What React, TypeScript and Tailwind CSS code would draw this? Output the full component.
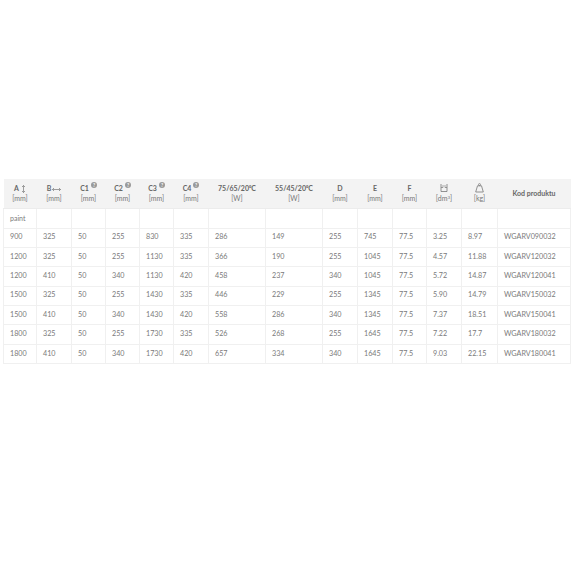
import React from "react";

const widths = [33, 35, 34, 34, 34, 35, 57, 57, 35, 35, 34, 35, 36, 73];

const rows = [
  ["900", "325", "50", "255", "830", "335", "286", "149", "255", "745", "77.5", "3.25", "8.97", "WGARV090032"],
  ["1200", "325", "50", "255", "1130", "335", "366", "190", "255", "1045", "77.5", "4.57", "11.88", "WGARV120032"],
  ["1200", "410", "50", "340", "1130", "420", "458", "237", "340", "1045", "77.5", "5.72", "14.87", "WGARV120041"],
  ["1500", "325", "50", "255", "1430", "335", "446", "229", "255", "1345", "77.5", "5.90", "14.79", "WGARV150032"],
  ["1500", "410", "50", "340", "1430", "420", "558", "286", "340", "1345", "77.5", "7.37", "18.51", "WGARV150041"],
  ["1800", "325", "50", "255", "1730", "335", "526", "268", "255", "1645", "77.5", "7.22", "17.7", "WGARV180032"],
  ["1800", "410", "50", "340", "1730", "420", "657", "334", "340", "1645", "77.5", "9.03", "22.15", "WGARV180041"],
];

function Info() {
  return (
    <svg width="6" height="6" viewBox="0 0 10 10" className="inline-block align-top ml-[2px] -mt-[1px]">
      <circle cx="5" cy="5" r="5" fill="#999" />
      <text x="5" y="8" textAnchor="middle" fontSize="8" fill="#fff" fontFamily="Lato, sans-serif" fontWeight="700">?</text>
    </svg>
  );
}

function VArrow() {
  return (
    <svg width="5" height="8" viewBox="0 0 5 8" className="inline-block align-middle ml-[2px]">
      <path d="M2.5 0.5 V7.5 M1 2 L2.5 0.5 L4 2 M1 6 L2.5 7.5 L4 6" stroke="#777" strokeWidth="0.7" fill="none" />
    </svg>
  );
}

function HArrow() {
  return (
    <svg width="9" height="5" viewBox="0 0 9 5" className="inline-block align-middle ml-[1px]">
      <path d="M0.5 2.5 H8.5 M2 1 L0.5 2.5 L2 4 M7 1 L8.5 2.5 L7 4" stroke="#777" strokeWidth="0.7" fill="none" />
    </svg>
  );
}

function Bucket() {
  return (
    <svg width="8" height="10" viewBox="0 0 8 10" className="inline-block align-bottom">
      <path d="M1 1 V8.5 H7 V1" stroke="#777" strokeWidth="0.8" fill="none" />
      <path d="M1 4.5 H3 M5 4.5 H7" stroke="#777" strokeWidth="0.7" fill="none" />
      <path d="M3 2 V4.5 M5 2 V4.5" stroke="#777" strokeWidth="0.6" fill="none" />
    </svg>
  );
}

function Weight() {
  return (
    <svg width="9" height="10" viewBox="0 0 9 10" className="inline-block align-bottom">
      <circle cx="4.5" cy="1.6" r="1" stroke="#777" strokeWidth="0.7" fill="none" />
      <path d="M2.5 2.8 H6.5 L8.3 9 H0.7 Z" stroke="#777" strokeWidth="0.8" fill="none" strokeLinejoin="round" />
    </svg>
  );
}

function H({ top, bottom }: { top: React.ReactNode; bottom?: React.ReactNode }) {
  return (
    <th className="font-normal text-center align-middle px-[2px] border-b border-[#ececec]">
      <div className="leading-[10px] font-bold text-[7px] text-[#666] whitespace-nowrap">{top}</div>
      {bottom && <div className="leading-[10px] text-[7px] text-[#777] whitespace-nowrap">{bottom}</div>}
    </th>
  );
}

export default function App() {
  return (
    <div className="w-[576px] h-[576px] bg-white pt-[179px] pl-[3px]" style={{ fontFamily: "Lato, 'Open Sans', sans-serif" }}>
      <table className="border-collapse table-fixed w-[567px] text-[#7a7a7a]">
        <colgroup>
          {widths.map((w, i) => (
            <col key={i} style={{ width: w }} />
          ))}
        </colgroup>
        <thead>
          <tr className="bg-[#f3f3f3] h-[29px]">
            <H top={<>A<VArrow /></>} bottom="[mm]" />
            <H top={<>B<HArrow /></>} bottom="[mm]" />
            <H top={<>C1<Info /></>} bottom="[mm]" />
            <H top={<>C2<Info /></>} bottom="[mm]" />
            <H top={<>C3<Info /></>} bottom="[mm]" />
            <H top={<>C4<Info /></>} bottom="[mm]" />
            <H top="75/65/20⁰C" bottom="[W]" />
            <H top="55/45/20⁰C" bottom="[W]" />
            <H top="D" bottom="[mm]" />
            <H top="E" bottom="[mm]" />
            <H top="F" bottom="[mm]" />
            <H top={<Bucket />} bottom={<>[dm<sup className="text-[4.5px]">3</sup>]</>} />
            <H top={<Weight />} bottom="[kg]" />
            <H top="Kod produktu" />
          </tr>
        </thead>
        <tbody>
          <tr className="h-[20px]">
            <td className="px-[6px] text-[7px] border border-[#f0f0f0]">paint</td>
            {widths.slice(1).map((_, i) => (
              <td key={i} className="border border-[#f0f0f0]" />
            ))}
          </tr>
          {rows.map((r, ri) => (
            <tr key={ri} className="h-[19.4px]">
              {r.map((c, ci) => (
                <td key={ci} className="px-[6px] text-[7.2px] whitespace-nowrap border border-[#f0f0f0]">
                  {c}
                </td>
              ))}
            </tr>
          ))}
        </tbody>
      </table>
    </div>
  );
}
